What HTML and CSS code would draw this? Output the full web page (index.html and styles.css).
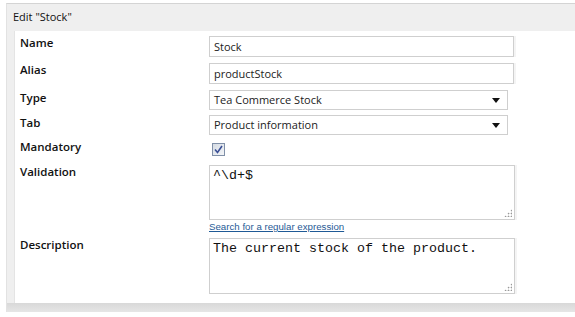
FILE: index.html
```html
<!DOCTYPE html>
<html lang="en">
<head>
    <meta charset="UTF-8">
    <title>Edit "Stock"</title>
    <link rel="stylesheet" href="styles.css">
</head>
<body>
    <div class="panel">
        <div class="panel-title">Edit "Stock"</div>
        <div class="panel-body">
            <div class="row row-name">
                <div class="label">Name</div>
                <div class="field"><div class="input">Stock</div></div>
            </div>
            <div class="row row-alias">
                <div class="label">Alias</div>
                <div class="field"><div class="input">productStock</div></div>
            </div>
            <div class="row row-type">
                <div class="label">Type</div>
                <div class="field"><div class="select"><span>Tea Commerce Stock</span><span class="arrow"></span></div></div>
            </div>
            <div class="row row-tab">
                <div class="label">Tab</div>
                <div class="field"><div class="select"><span>Product information</span><span class="arrow"></span></div></div>
            </div>
            <div class="row row-mandatory">
                <div class="label">Mandatory</div>
                <div class="field">
                    <span class="checkbox">
                        <svg width="9" height="9" viewBox="0 0 9 9"><path d="M1 4.5 L3.5 7.5 L8 1" fill="none" stroke="#3a4f96" stroke-width="1.6"/></svg>
                    </span>
                </div>
            </div>
            <div class="row row-validation">
                <div class="label">Validation</div>
                <div class="field">
                    <div class="textarea">^\d+$<span class="grip"></span></div>
                    <a class="link" href="#">Search for a regular expression</a>
                </div>
            </div>
            <div class="row row-description">
                <div class="label">Description</div>
                <div class="field">
                    <div class="textarea">The current stock of the product.<span class="grip"></span></div>
                </div>
            </div>
        </div>
        <div class="panel-foot"></div>
    </div>
</body>
</html>
```

FILE: styles.css
```css
body {
    margin: 0;
    background-color: #ffffff;
    font-family: 'Open Sans', 'Liberation Sans', sans-serif;
    color: #000000;
}

.panel {
    margin: 3px 0 0 6px;
    border-top: 1px solid #d4d4d4;
    border-left: 1px solid #e2e2e2;
    background-color: #efefef;
    display: flex;
    flex-direction: column;
}

.panel-title {
    height: 27px;
    line-height: 25px;
    padding-left: 6px;
    font-size: 11px;
    color: #111111;
}

.panel-body {
    margin-left: 7px;
    background-color: #ffffff;
    border-left: 1px solid #e4e4e4;
    padding: 5px 0 10px 5px;
    height: 257px;
}

.panel-foot {
    height: 9px;
    background: linear-gradient(#d8d8d8, #e6e6e6);
}

.row {
    display: flex;
}

.label {
    width: 189px;
    font-size: 11.5px;
    font-weight: 600;
    line-height: 14px;
    color: #111111;
}

.field {
    display: flex;
    flex-direction: column;
}

.row-alias { margin-top: 6px; }
.row-type { margin-top: 6px; }
.row-tab { margin-top: 5px; }
.row-mandatory { margin-top: 7px; }
.row-validation { margin-top: 9px; }
.row-description { margin-top: 5px; }

.row-type .label, .row-tab .label { padding-top: 1px; }
.row-mandatory .label { margin-top: -2px; }

.input {
    width: 299px;
    height: 19px;
    border: 1px solid #cfcfcf;
    padding-left: 4px;
    font-size: 11px;
    line-height: 19px;
    color: #222222;
    box-shadow: 2px 0 0 #f4f4f4;
}

.select {
    width: 286px;
    height: 18px;
    border: 1px solid #cfcfcf;
    padding: 0 7px 0 4px;
    font-size: 11px;
    line-height: 18px;
    color: #222222;
    display: flex;
    justify-content: space-between;
    align-items: center;
}

.arrow {
    width: 0;
    height: 0;
    border-left: 4px solid transparent;
    border-right: 4px solid transparent;
    border-top: 5px solid #111111;
    margin-top: 1px;
}

.checkbox {
    width: 11px;
    height: 11px;
    margin: 1px 0 0 3px;
    border: 1px solid #8090a8;
    background: linear-gradient(135deg, #d5dbe3, #f3f5f8);
    display: flex;
    align-items: center;
    justify-content: center;
}

.textarea {
    position: relative;
    width: 301px;
    height: 52px;
    border: 1px solid #cfcfcf;
    padding: 2px 0 0 3px;
    font-family: 'Liberation Mono', monospace;
    font-size: 13.33px;
    line-height: 15px;
    color: #111111;
    box-shadow: 2px 0 0 #f4f4f4;
}

.row-validation .textarea {
    height: 51px;
}

.grip {
    position: absolute;
    right: 2px;
    bottom: 2px;
    width: 8px;
    height: 8px;
    background:
        radial-gradient(circle, #999999 0.8px, transparent 1.1px) 0 0 / 3px 3px;
    clip-path: polygon(100% 0, 100% 100%, 0 100%);
}

.link {
    margin-top: 1px;
    font-family: 'Liberation Sans', sans-serif;
    font-size: 9.7px;
    line-height: 12px;
    color: #1f5a96;
}
```
